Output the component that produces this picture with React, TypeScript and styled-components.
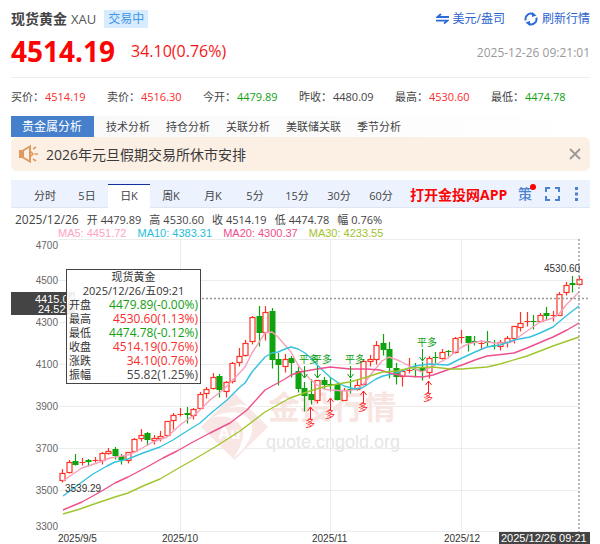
import React, { useState } from 'react';
import styled, { createGlobalStyle } from 'styled-components';

const Global = createGlobalStyle`
  * { box-sizing: border-box; }
  body {
    margin: 0;
    background: #fff;
    color: #444;
    font-family: "Open Sans", "Noto Sans CJK SC", sans-serif;
    font-size: 11px;
  }
  button { font: inherit; color: inherit; background: none; border: 0; padding: 0; cursor: pointer; }
  a { color: inherit; text-decoration: none; }
`;

const RED = '#ff3226';
const GREEN = '#0c9d12';

type Tone = 'up' | 'down' | 'flat';
const toneColor = (t: Tone) => (t === 'up' ? '#fb2c2c' : t === 'down' ? '#12a012' : '#444');

const Page = styled.main`
  overflow: hidden;
`;

const Section = styled.section`
  margin: 0 10px 0 11px;
`;

const Header = styled.header`
  display: flex;
  align-items: center;
  height: 38px;
  font-size: 12px;
`;

const Name = styled.h1`
  margin: 0 4px 0 0;
  font-size: 14px;
  line-height: 20px;
`;

const Code = styled.span`
  font-size: 13px;
  color: #555;
`;

const Status = styled.span`
  margin-left: 8px;
  padding: 0 4px;
  line-height: 18px;
  background: #d8ecff;
  color: #3f97ea;
`;

const HeaderActions = styled.div`
  display: flex;
  gap: 19px;
  margin-left: auto;
`;

const ActionButton = styled.button`
  display: flex;
  align-items: center;
  gap: 4px;
  color: #2b63cf;
  line-height: 18px;
`;

const PriceRow = styled.div`
  display: flex;
  align-items: center;
  height: 40px;
  padding-bottom: 14px;
  border-bottom: 1px solid #eee;
`;

const Price = styled.strong`
  font-size: 28px;
  line-height: 28px;
  color: #fb0404;
`;

const Change = styled.span`
  margin-left: 16px;
  font-size: 16px;
  color: #f81414;
`;

const Time = styled.time`
  margin-left: auto;
  padding-top: 4px;
  font-size: 12px;
  color: #999;
`;

const Quotes = styled.dl`
  display: grid;
  grid-template-columns: repeat(6, 1fr);
  margin: 0;
  padding: 11px 3px 11px 0;
  line-height: 16px;
`;

const Quote = styled.div`
  display: flex;
  gap: 1px;
  white-space: nowrap;
`;

const QuoteValue = styled.dd<{ $tone: Tone }>`
  margin: 0;
  color: ${(p) => toneColor(p.$tone)};
`;

const AnalysisNav = styled.nav`
  display: flex;
  gap: 16px;
  height: 21px;
  line-height: 21px;
  background: linear-gradient(90deg, #f8f8f8, #fff);
`;

const AnalysisLink = styled.a<{ $active?: boolean }>`
  ${(p) =>
    p.$active &&
    `
    padding: 0 12px 0 11px;
    margin-right: -4px;
    background: #467fcb;
    color: #fff;
    font-size: 12px;
  `}
`;

const Notice = styled.div`
  display: flex;
  align-items: center;
  height: 34px;
  padding: 0 9px 0 8px;
  border-radius: 6px;
  background: #fcf0e5;
  color: #3a3a3a;
  font-size: 14px;
`;

const NoticeText = styled.a`
  flex: 1;
  margin-left: 8px;
`;

const IconButton = styled.button`
  position: relative;
  display: flex;
  align-items: center;
`;

const ChartBar = styled.div`
  display: flex;
  align-items: center;
  height: 28px;
  margin-top: 9px;
  padding: 0 7px 0 13px;
  background: #edf3fe;
  border-bottom: 1px solid #dfe6f3;
`;

const PeriodTabs = styled.div`
  display: flex;
  flex: 0 1 378px;
  align-self: stretch;
  padding-top: 4px;
`;

const PeriodTab = styled.button<{ $active: boolean }>`
  flex: 1;
  margin-bottom: -1px;
  padding-bottom: 3px;
  border-top: 1px solid ${(p) => (p.$active ? '#12309a' : 'transparent')};
  background: ${(p) => (p.$active ? '#fff' : 'transparent')};
`;

const AppLink = styled.a`
  margin: 0 auto 0 8px;
  color: #fb0404;
  font-size: 14px;
  font-weight: 700;
  white-space: nowrap;
`;

const Tools = styled.div`
  display: flex;
  align-items: center;
  gap: 13px;
`;

const StrategyButton = styled(IconButton)`
  color: #4a82cf;
  font-size: 14px;
  font-weight: 500;
  line-height: 20px;
`;

const Dot = styled.i`
  position: absolute;
  top: 0;
  right: -4px;
  width: 6px;
  height: 6px;
  border-radius: 50%;
  background: #f00;
`;

const InfoLine = styled.div`
  display: flex;
  gap: 8px;
  padding: 4px 0 0 4px;
  line-height: 16px;
  white-space: nowrap;
`;

const InfoDate = styled.span`
  font-size: 12px;
`;

const InfoItem = styled.span`
  display: flex;
  gap: 3px;
`;

const Averages = styled.div`
  display: flex;
  gap: 11px;
  padding-left: 47px;
  font-family: "Liberation Sans", sans-serif;
  font-size: 11px;
  line-height: 11px;
`;

const Average = styled.span<{ $color: string }>`
  color: ${(p) => p.$color};
`;

const ChartArea = styled.div`
  position: relative;
`;

const ChartSvg = styled.svg`
  display: block;
  width: 100%;
  height: auto;
  font-family: "Liberation Sans", "Noto Sans CJK SC", sans-serif;
  font-size: 10px;
`;

const Tooltip = styled.div`
  position: absolute;
  left: 11%;
  top: 30px;
  width: 135px;
  border: 1px solid #444;
  background: rgba(255, 255, 255, 0.92);
  color: #333;
  line-height: 14px;
  padding: 0 2px 1px;
`;

const TooltipTitle = styled.div`
  text-align: center;
`;

const TooltipRow = styled.div`
  display: flex;
  justify-content: space-between;
`;

const TooltipValue = styled.span<{ $tone: Tone }>`
  font-size: 12px;
  color: ${(p) => toneColor(p.$tone)};
`;

const quotes: [string, string, Tone][] = [
  ['买价', '4514.19', 'up'],
  ['卖价', '4516.30', 'up'],
  ['今开', '4479.89', 'down'],
  ['昨收', '4480.09', 'flat'],
  ['最高', '4530.60', 'up'],
  ['最低', '4474.78', 'down'],
];

const analyses = ['贵金属分析', '技术分析', '持仓分析', '关联分析', '美联储关联', '季节分析'];
const periods = ['分时', '5日', '日K', '周K', '月K', '5分', '15分', '30分', '60分'];
const info = [
  ['开', '4479.89'],
  ['高', '4530.60'],
  ['收', '4514.19'],
  ['低', '4474.78'],
  ['幅', '0.76%'],
];
const tips: [string, string, Tone][] = [
  ['开盘', '4479.89(-0.00%)', 'down'],
  ['最高', '4530.60(1.13%)', 'up'],
  ['最低', '4474.78(-0.12%)', 'down'],
  ['收盘', '4514.19(0.76%)', 'up'],
  ['涨跌', '34.10(0.76%)', 'up'],
  ['振幅', '55.82(1.25%)', 'flat'],
];

// Each candle: direction, high, body top, body bottom, low (chart units).
type Candle = ['r' | 'g', number, number, number, number];
const candles: Candle[] = [
  ['r', 469, 473, 480, 482], ['r', 460, 462, 472, 473], ['g', 454, 461, 465, 465], ['r', 458, 462, 463, 465],
  ['g', 459, 460, 462, 466], ['r', 457, 460, 461, 462], ['r', 452, 453, 460, 464], ['r', 448, 451, 453, 454],
  ['g', 447, 449, 456, 459], ['g', 454, 456, 460, 464], ['r', 452, 452, 460, 463], ['r', 438, 439, 451, 452],
  ['r', 429, 435, 438, 441], ['g', 432, 433, 440, 445], ['r', 435, 438, 440, 444], ['r', 431, 436, 438, 441],
  ['r', 421, 421, 435, 436], ['r', 413, 415, 420, 429], ['r', 408, 414, 415, 416], ['g', 407, 413, 415, 423],
  ['r', 408, 409, 415, 419], ['r', 392, 394, 408, 409], ['r', 387, 389, 393, 398], ['r', 373, 377, 388, 389],
  ['g', 374, 376, 390, 397], ['r', 381, 382, 391, 397], ['r', 362, 363, 381, 383], ['r', 348, 356, 362, 366],
  ['r', 340, 343, 355, 356], ['r', 316, 317, 341, 344], ['g', 306, 316, 333, 346], ['r', 306, 312, 332, 340],
  ['g', 308, 311, 360, 368], ['g', 353, 359, 365, 385], ['r', 354, 359, 366, 372], ['g', 356, 358, 363, 377],
  ['g', 367, 371, 389, 392], ['g', 382, 388, 396, 411], ['g', 379, 394, 400, 404], ['r', 380, 380, 400, 403],
  ['g', 377, 380, 385, 389], ['g', 378, 384, 385, 391], ['g', 383, 384, 400, 400], ['r', 388, 390, 400, 400],
  ['g', 379, 389, 390, 393], ['r', 380, 385, 389, 390], ['r', 359, 361, 384, 385], ['r', 355, 359, 361, 366],
  ['r', 341, 345, 359, 364], ['g', 334, 343, 350, 355], ['g', 342, 349, 368, 378], ['g', 363, 368, 377, 384],
  ['r', 370, 371, 376, 386], ['r', 358, 370, 371, 373], ['g', 363, 369, 370, 377], ['g', 362, 368, 371, 380],
  ['r', 356, 358, 372, 378], ['g', 352, 357, 358, 363], ['r', 349, 352, 358, 359], ['g', 350, 351, 352, 356],
  ['r', 337, 338, 352, 353], ['r', 330, 337, 338, 343], ['g', 336, 336, 343, 351], ['g', 336, 341, 343, 345],
  ['r', 340, 343, 344, 349], ['g', 331, 341, 343, 346], ['g', 340, 345, 346, 349], ['r', 340, 342, 346, 350],
  ['r', 336, 338, 342, 347], ['r', 326, 326, 338, 343], ['r', 312, 323, 327, 331], ['r', 312, 321, 322, 326],
  ['g', 315, 321, 322, 329], ['r', 313, 315, 321, 322], ['g', 307, 313, 316, 320], ['r', 311, 315, 316, 321],
  ['r', 292, 294, 315, 315], ['r', 282, 285, 292, 295], ['g', 276, 283, 285, 292], ['r', 276, 279, 284, 285],
];
const candleX = (i: number) => 62.3 + i * 6.54;

const averages = [
  {
    label: 'MA5: 4451.72', color: '#ffa3c0', line: '#f79fbd',
    points: '63,481 70,476 82,468 97,463 110,458 128,455 137,451 153,442 167,437 180,425 197,413 210,400 223,390 232,381 245,367 252,353 265,333 272,332 278,337 291,352 298,365 304,373 310,379 317,385 324,389 330,390 347,391 357,389 363,385 372,373 382,361 389,357 400,361 415,369 422,372 433,366 448,358 455,352 462,347 468,344 481,341 494,343 507,343 514,341 520,336 530,329 540,322 553,318 559,314 566,305 579,292',
  },
  {
    label: 'MA10: 4383.31', color: '#28bcd8', line: '#35c2de',
    points: '63,496 70,491 82,482 93,474 107,466 115,462 128,459 143,453 160,447 173,440 187,431 200,423 210,414 227,400 240,387 245,383 252,372 265,357 272,353 278,352 285,349 291,347 298,349 305,353 313,360 317,365 330,377 337,382 344,386 355,389 362,388 370,383 376,379 383,376 396,373 407,369 415,366 429,364 448,365 462,358 475,352 487,347 500,345 514,340 530,337 540,333 553,327 566,316 579,306',
  },
  {
    label: 'MA20: 4300.37', color: '#ef4e8c', line: '#ef4f8d',
    points: '63,510 82,502 100,492 115,483 128,477 147,467 163,458 177,451 193,442 210,433 230,423 247,410 265,390 285,379 291,375 300,372 317,369 330,367 350,369 367,369 380,370 390,373 403,376 423,377 433,375 450,369 462,365 475,360 487,356 514,353 527,348 553,337 567,330 579,323',
  },
  {
    label: 'MA30: 4233.55', color: '#a1c22e', line: '#a0c62f',
    points: '63,514 80,509 97,503 115,497 128,493 143,486 160,479 177,469 193,460 215,447 240,431 265,412 290,398 307,392 323,387 343,383 350,382 367,377 376,374 383,372 397,371 410,368 433,367 450,369 462,369 487,367 500,364 527,356 553,346 579,337',
  },
];

const levels: [string, number, number][] = [
  ['4700', 239, 249], ['4500', 280, 284], ['4300', 322, 326], ['4100', 364, 368],
  ['3900', 406, 410], ['3700', 448, 452], ['3500', 490, 494], ['3300', 531, 530],
];
const sells = [[304, 363], [317, 363], [350, 363], [422, 346]];
const buys = [[310, 407], [330, 398], [363, 391], [428, 381]];

const Candlestick = ({ c, x }: { c: Candle; x: number }) => {
  const [kind, high, top, bottom, low] = c;
  const color = kind === 'r' ? RED : '#0fa40f';
  const cx = Math.round(x) + 0.5;
  const solid = kind === 'g' || bottom - top < 2;
  return (
    <g stroke={color} strokeWidth="1.200">
      <path d={`M${cx} ${high}V${top}M${cx} ${bottom}V${low + 0.5}`} />
      {solid ? (
        <rect x={cx - 3} y={top} width="6" height={Math.max(bottom - top, 1)} fill={color} stroke="none" />
      ) : (
        <rect x={cx - 2.5} y={top + 0.5} width="5" height={bottom - top} fill="#fff" />
      )}
    </g>
  );
};

const KLineChart = () => (
  <ChartSvg viewBox="0 239 600 305" role="img" aria-label="现货黄金 日K">
    <g stroke="#ececec">
      {levels.map(([t, y]) => (
        <path key={t} d={`M58 ${y + 0.5}H579`} />
      ))}
      {[180, 330, 461].map((x) => (
        <path key={x} d={`M${x + 0.5} 239V532`} />
      ))}
    </g>
    <g>
      <path d="M234.500 393L268 427L234.500 460L201 427Z" fill="#f8e7e4" />
      <path d="M210 418Q239 404 251 422Q257 438 233 459Q248 436 241 426Q231 413 210 418Z" fill="#fff" />
      <path d="M223 410Q255 399 260 426Q258 406 240 404Z" fill="#fff" />
      <text x="218" y="439" fill="#fff" fontSize="17" fontWeight="700">Au</text>
      <text x="268" y="419" fill="#f8e5e1" fontSize="32" fontWeight="700">金投行情</text>
      <text x="266" y="448" fill="#e6e6e6" fontSize="18">quote.cngold.org</text>
    </g>
    <g fill="#666" textAnchor="end">
      {levels.map(([t, , y]) => (
        <text key={t} x="58" y={y}>{t}</text>
      ))}
    </g>
    {candles.map((c, i) => (
      <Candlestick key={i} c={c} x={candleX(i)} />
    ))}
    <g fill="none" strokeWidth="1.400" strokeLinejoin="round">
      {averages.map((a) => (
        <polyline key={a.label} points={a.points} stroke={a.line} />
      ))}
    </g>
    <g fill={GREEN} fontFamily='"Noto Sans CJK SC", sans-serif'>
      {sells.map(([x, y]) => (
        <g key={x}>
          <text x={x - 5} y={y}>平多</text>
          <path d={`M${x + 0.5} ${y + 3}v12m-3 -4l3 4l3 -4`} fill="none" stroke={GREEN} />
        </g>
      ))}
    </g>
    <g fill="#fb1d1d" fontFamily='"Noto Sans CJK SC", sans-serif'>
      {buys.map(([x, y]) => (
        <g key={x}>
          <path d={`M${x + 0.5} ${y + 12}v-12m-3 4l3 -4l3 4`} fill="none" stroke="#fb1d1d" />
          <text x={x - 5} y={y + 20}>多</text>
        </g>
      ))}
    </g>
    <path d="M66 298.500H590M579 239V532" fill="none" stroke="#999" strokeWidth="1.400" strokeDasharray="2 2" />
    <g fill="#333">
      <text x="65" y="492">3539.29</text>
      <text x="544" y="272">4530.60</text>
      <text x="58" y="542">2025/9/5</text>
      <text x="162" y="542">2025/10</text>
      <text x="312" y="542">2025/11</text>
      <text x="444" y="542">2025/12</text>
    </g>
    <rect x="11" y="292" width="64" height="23" fill="#444" />
    <rect x="499" y="532" width="91" height="12" fill="#444" />
    <g fill="#fff" fontSize="11">
      <text x="35" y="303">4415.04</text>
      <text x="38" y="313">24.52</text>
      <text x="501" y="542">2025/12/26 09:21</text>
    </g>
  </ChartSvg>
);

const SwapIcon = () => (
  <svg width="13" height="12" viewBox="0 0 13 12" fill="none" stroke="#2b6ad8" strokeWidth="1.800">
    <path d="M13 4H1.500L5 1M0 7.600H11.500L8 10.600" />
  </svg>
);

const RefreshIcon = () => (
  <svg width="14" height="14" viewBox="0 0 14 14" fill="#2b6ad8">
    <path d="M1.700 8.400A5.300 5.300 0 0 1 9 2.100M12.300 5.600A5.300 5.300 0 0 1 5 11.900" fill="none" stroke="#2b6ad8" strokeWidth="2" />
    <path d="M8 0L12.500 3.500L8 5ZM6 14L1.500 10.500L6 9Z" />
  </svg>
);

const HornIcon = () => (
  <svg width="19" height="18" viewBox="0 0 19 18" fill="none" stroke="#dd9b62" strokeWidth="1.600">
    <path d="M0 5H5V13H0Z" fill="#dd9b62" stroke="none" />
    <path d="M4 5.500L11 1.500V16.500L4 12.500" strokeWidth="2" />
    <path d="M11 6L14 9L11 12M14 4L17 2M15.500 9H19M14 14L17 16" />
  </svg>
);

export default function App() {
  const [period, setPeriod] = useState('日K');
  const [noticeOpen, setNoticeOpen] = useState(true);
  return (
    <Page>
      <Global />
      <Section>
        <Header>
          <Name>现货黄金</Name>
          <Code>XAU</Code>
          <Status>交易中</Status>
          <HeaderActions>
            <ActionButton><SwapIcon />美元/盎司</ActionButton>
            <ActionButton><RefreshIcon />刷新行情</ActionButton>
          </HeaderActions>
        </Header>
        <PriceRow>
          <Price>4514.19</Price>
          <Change>34.10(0.76%)</Change>
          <Time>2025-12-26 09:21:01</Time>
        </PriceRow>
        <Quotes>
          {quotes.map(([k, v, tone]) => (
            <Quote key={k}>
              <dt>{k}：</dt>
              <QuoteValue $tone={tone}>{v}</QuoteValue>
            </Quote>
          ))}
        </Quotes>
        <AnalysisNav>
          {analyses.map((a, i) => (
            <AnalysisLink key={a} href="#" $active={i === 0}>{a}</AnalysisLink>
          ))}
        </AnalysisNav>
        {noticeOpen && (
          <Notice>
            <HornIcon />
            <NoticeText href="#">2026年元旦假期交易所休市安排</NoticeText>
            <IconButton aria-label="关闭" onClick={() => setNoticeOpen(false)}>
              <svg width="12" height="12" viewBox="0 0 12 12" stroke="#999" strokeWidth="1.800">
                <path d="M1 1L11 11M11 1L1 11" />
              </svg>
            </IconButton>
          </Notice>
        )}
        <ChartBar>
          <PeriodTabs>
            {periods.map((p) => (
              <PeriodTab key={p} $active={p === period} onClick={() => setPeriod(p)}>{p}</PeriodTab>
            ))}
          </PeriodTabs>
          <AppLink href="#">打开金投网APP</AppLink>
          <Tools>
            <StrategyButton>策<Dot /></StrategyButton>
            <IconButton aria-label="全屏">
              <svg width="15" height="14" viewBox="0 0 15 14" fill="none" stroke="#4a82cf" strokeWidth="2">
                <path d="M5 1H1V5M10 1H14V5M5 13H1V9M10 13H14V9" />
              </svg>
            </IconButton>
            <IconButton aria-label="更多">
              <svg width="10" height="14" viewBox="0 0 10 14" fill="#4a82cf">
                <path d="M2 0H5V3H2ZM2 5.500H5V8.500H2ZM2 11H5V14H2Z" />
              </svg>
            </IconButton>
          </Tools>
        </ChartBar>
        <InfoLine>
          <InfoDate>2025/12/26</InfoDate>
          {info.map(([k, v]) => (
            <InfoItem key={k}><span>{k}</span><span>{v}</span></InfoItem>
          ))}
        </InfoLine>
        <Averages>
          {averages.map((a) => (
            <Average key={a.label} $color={a.color}>{a.label}</Average>
          ))}
        </Averages>
      </Section>
      <ChartArea>
        <KLineChart />
        <Tooltip>
          <TooltipTitle>现货黄金</TooltipTitle>
          <TooltipTitle>2025/12/26/五09:21</TooltipTitle>
          {tips.map(([k, v, tone]) => (
            <TooltipRow key={k}>
              <span>{k}</span>
              <TooltipValue $tone={tone}>{v}</TooltipValue>
            </TooltipRow>
          ))}
        </Tooltip>
      </ChartArea>
    </Page>
  );
}
